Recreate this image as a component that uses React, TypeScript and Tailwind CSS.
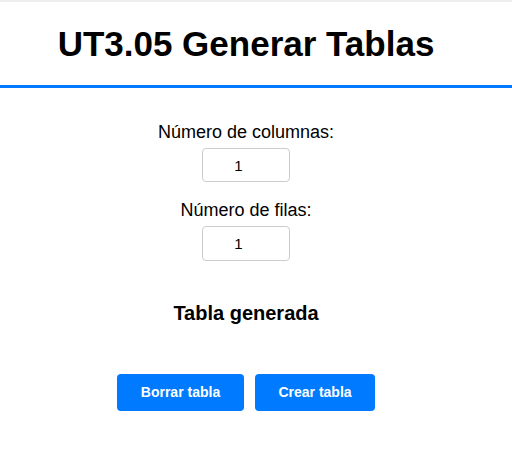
import { useState } from "react";

export default function App() {
  const [cols, setCols] = useState("1");
  const [rows, setRows] = useState("1");

  return (
    <div className="min-h-screen bg-white text-black" style={{ fontFamily: '"Liberation Sans", Arial, sans-serif' }}>
      <header className="flex h-[88px] items-center border-t-2 border-b-[3px] border-t-[#eeeeee] border-b-[#007bff]">
        <h1 className="w-[492px] text-center text-[35px] font-bold leading-[40px]">UT3.05 Generar Tablas</h1>
      </header>

      <main className="flex w-[492px] flex-col items-center text-center">
        <label className="mt-[34px] text-[18px] leading-[21px]" htmlFor="cols">Número de columnas:</label>
        <input
          id="cols"
          type="number"
          min={1}
          value={cols}
          onChange={(e) => setCols(e.target.value)}
          className="mt-[5px] h-[34px] w-[88px] rounded-[4px] border border-[#cccccc] px-[2px] text-center text-[15px] text-black outline-none"
        />

        <label className="mt-[18px] text-[18px] leading-[21px]" htmlFor="rows">Número de filas:</label>
        <input
          id="rows"
          type="number"
          min={1}
          value={rows}
          onChange={(e) => setRows(e.target.value)}
          className="mt-[5px] h-[35px] w-[88px] rounded-[4px] border border-[#cccccc] px-[2px] text-center text-[15px] text-black outline-none"
        />

        <h2 className="mt-[41px] text-[20px] font-bold leading-[23px]">Tabla generada</h2>

        <div className="mt-[49px] flex gap-[11px]">
          <button className="h-[37px] w-[127px] rounded-[4px] bg-[#007bff] text-[14px] font-bold text-white">Borrar tabla</button>
          <button className="h-[37px] w-[120px] rounded-[4px] bg-[#007bff] text-[14px] font-bold text-white">Crear tabla</button>
        </div>
      </main>
    </div>
  );
}
